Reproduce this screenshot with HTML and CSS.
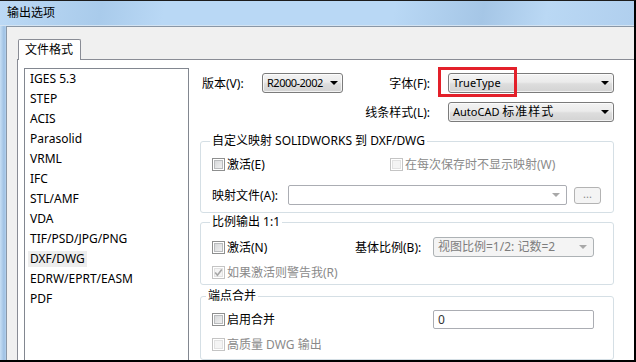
FILE: index.html
```html
<!DOCTYPE html>
<html lang="zh-CN">
<head>
  <meta charset="UTF-8">
  <title>输出选项</title>
  <link rel="stylesheet" href="styles.css">
</head>
<body>
  <div class="window">
    <div class="titlebar">输出选项</div>
    <div class="client">
      <div class="tabs">
        <div class="tab">文件格式</div>
      </div>
      <div class="panel">
        <ul class="format-list">
          <li><span>IGES 5.3</span></li>
          <li><span>STEP</span></li>
          <li><span>ACIS</span></li>
          <li><span>Parasolid</span></li>
          <li><span>VRML</span></li>
          <li><span>IFC</span></li>
          <li><span>STL/AMF</span></li>
          <li><span>VDA</span></li>
          <li><span>TIF/PSD/JPG/PNG</span></li>
          <li class="selected"><span>DXF/DWG</span></li>
          <li><span>EDRW/EPRT/EASM</span></li>
          <li><span>PDF</span></li>
        </ul>

        <div class="options">
          <div class="top-grid">
            <div class="label first">版本(V):</div>
            <div class="combo version">R2000-2002<i class="arrow"></i></div>
            <div class="label right">字体(F):</div>
            <div class="combo-wrap">
              <div class="combo">TrueType<i class="arrow"></i></div>
              <div class="mark"></div>
            </div>
            <div class="label right span3">线条样式(L):</div>
            <div class="combo">AutoCAD <span class="cjk">标准样式</span><i class="arrow"></i></div>
          </div>

          <fieldset class="group map-group">
            <legend>自定义映射 SOLIDWORKS 到 DXF/DWG</legend>
            <div class="row small">
              <label class="check cell-178"><i class="box"></i>激活(E)</label>
              <label class="check disabled"><i class="box"></i>在每次保存时不显示映射(W)</label>
            </div>
            <div class="row tall gap-13">
              <div class="cell-76">映射文件(A):</div>
              <div class="textbox map-file"><i class="arrow dim"></i></div>
              <div class="dots">...</div>
            </div>
          </fieldset>

          <fieldset class="group scale-group">
            <legend>比例输出 1:1</legend>
            <div class="row tall">
              <label class="check cell-143"><i class="box"></i>激活(N)</label>
              <div class="cell-78">基体比例(B):</div>
              <div class="combo off">视图比例=1/2: 记数=2<i class="arrow dim"></i></div>
            </div>
            <div class="row small gap-7">
              <label class="check disabled"><i class="box checked"><svg viewBox="0 0 13 13" width="13" height="13"><path d="M3.2 6.6 L5.4 9.2 L9.8 3.4" fill="none" stroke="#a6a6a6" stroke-width="1.6"/></svg></i>如果激活则警告我(R)</label>
            </div>
          </fieldset>

          <fieldset class="group merge-group">
            <legend>端点合并</legend>
            <div class="row tall">
              <label class="check cell-221"><i class="box"></i>启用合并</label>
              <div class="textbox merge-value">0</div>
            </div>
            <div class="row small gap-5">
              <label class="check disabled"><i class="box"></i>高质量 DWG 输出</label>
            </div>
          </fieldset>
        </div>
      </div>
    </div>
  </div>
</body>
</html>
```

FILE: styles.css
```css
* {
  box-sizing: border-box;
  margin: 0;
  padding: 0;
}

body {
  font-family: "Noto Sans", "Noto Sans CJK SC", sans-serif;
  font-size: 12px;
  color: #000;
  background: #fff;
}

.window {
  width: 636px;
  height: 362px;
  overflow: hidden;
  display: flex;
  flex-direction: column;
  background: linear-gradient(90deg, #c6def4 0, #9fc1e3 4px, #b3d1ef 6px);
  border-top: 1px solid #1c1c1c;
  border-right: 2px solid #000;
  border-bottom: 2px solid #000;
}

.titlebar {
  height: 25px;
  line-height: 24px;
  padding-left: 7px;
  border-bottom: 1px solid #d3e3f2;
  background: linear-gradient(100deg, #bcd9f5 0%, #a9cbeb 16%, #b9d8f5 26%, #b9d8f5 62%, #a5c6e6 76%, #bad8f4 86%, #b0cfee 100%);
}

.client {
  flex: 1;
  min-height: 0;
  margin-left: 6px;
  display: flex;
  flex-direction: column;
  padding: 12px 0 0 10px;
  background: #f0f0f0;
  border-top: 1px solid #8a97a6;
  border-left: 1px solid #8a97a6;
}

.tabs {
  display: flex;
  padding-left: 1px;
}

.tab {
  position: relative;
  z-index: 1;
  height: 21px;
  line-height: 20px;
  padding: 0 7px 0 6px;
  margin-bottom: -1px;
  background: #fff;
  border: 1px solid #898c95;
  border-bottom: none;
  border-radius: 2px 2px 0 0;
}

.panel {
  flex: 1;
  min-height: 0;
  display: flex;
  align-items: stretch;
  padding: 8px 0 0 6px;
  background: #fff;
  border-top: 1px solid #898c95;
  border-left: 1px solid #898c95;
}

/* format list */
.format-list {
  list-style: none;
  width: 165px;
  flex-shrink: 0;
  padding-left: 3px;
  border: 1px solid #828790;
  border-bottom: none;
}

.format-list li {
  height: 20px;
  display: flex;
  align-items: center;
}

.format-list span {
  padding: 0 2px;
  line-height: 16px;
}

.format-list .selected span {
  background: #ededed;
}

/* right side */
.options {
  width: 414px;
  flex-shrink: 0;
  margin-left: 11px;
}

.top-grid {
  display: grid;
  grid-template-columns: 62px 81px 1fr 166px;
  grid-auto-rows: 20px;
  row-gap: 9px;
  margin-top: 5px;
}

.label {
  display: flex;
  align-items: center;
}

.label.first {
  padding-left: 2px;
}

.label.right {
  justify-content: flex-end;
  padding-right: 18px;
}

.span3 {
  grid-column: 1 / 4;
}

.combo {
  position: relative;
  height: 20px;
  line-height: 18px;
  padding-left: 4px;
  font-size: 11px;
  border: 1px solid #7b7b7b;
  border-radius: 3px;
  background: linear-gradient(#f3f3f3 0%, #ebebeb 45%, #dddddd 55%, #d3d3d3 100%);
  box-shadow: inset 0 0 0 1px rgba(255, 255, 255, 0.7);
  white-space: nowrap;
}

.combo.version {
  letter-spacing: -0.5px;
}

.combo .cjk {
  font-size: 12px;
  letter-spacing: 1px;
}

.combo.off {
  width: 161px;
  font-size: 12px;
  color: #7d7d7d;
  border-color: #adb2b5;
  background: #f4f4f4;
  box-shadow: none;
}

.combo-wrap {
  position: relative;
}

.arrow {
  position: absolute;
  right: 4px;
  top: 7px;
  width: 0;
  height: 0;
  border-left: 4px solid transparent;
  border-right: 4px solid transparent;
  border-top: 4px solid #000;
}

.arrow.dim {
  border-top-color: #a8a8a8;
  right: 6px;
}

.mark {
  position: absolute;
  left: -10px;
  top: -6px;
  width: 79px;
  height: 30px;
  border: 3px solid #e3202a;
}

/* group boxes */
.group {
  border: 1px solid #d5dfe5;
  border-radius: 3px;
  padding: 7px 11px;
}

.group legend {
  line-height: 16px;
  padding: 0 2px;
  margin-left: -2px;
}

.map-group {
  margin-top: 11px;
}

.scale-group {
  margin-top: 1px;
  padding-bottom: 4px;
}

.merge-group {
  margin-top: 3px;
  padding-top: 5px;
  padding-bottom: 7px;
}

.merge-group legend {
  margin-left: -6px;
}

.row {
  display: flex;
  align-items: center;
}

.row.small {
  height: 16px;
}

.row.tall {
  height: 20px;
}

.gap-13 { margin-top: 13px; }
.gap-7 { margin-top: 7px; }
.gap-5 { margin-top: 7px; }

.cell-178 { width: 178px; }
.cell-143 { width: 143px; }
.cell-221 { width: 221px; }
.cell-76 { width: 76px; }
.cell-78 { width: 78px; }

.check {
  display: flex;
  align-items: center;
  white-space: nowrap;
}

.box {
  position: relative;
  width: 13px;
  height: 13px;
  margin-right: 2px;
  flex-shrink: 0;
  border: 1px solid #8e8f8f;
  background: linear-gradient(135deg, #d0d2d4, #f6f6f6);
  box-shadow: inset 0 0 0 1px #fff, inset 0 0 0 2px #b9bbbd;
}

.box svg {
  position: absolute;
  left: -1px;
  top: -1px;
}

.disabled {
  color: #8a8a8a;
}

.disabled .box {
  border-color: #c4c4c4;
  background: #f4f4f4;
  box-shadow: inset 0 0 0 1px #fff, inset 0 0 0 2px #e2e2e2;
}

.textbox {
  position: relative;
  height: 20px;
  line-height: 18px;
  padding-left: 4px;
  border: 1px solid #abadb3;
  border-radius: 2px;
  background: #fff;
}

.map-file {
  width: 279px;
}

.merge-value {
  width: 161px;
  height: 19px;
  line-height: 17px;
  color: #333;
}

.dots {
  width: 27px;
  height: 17px;
  margin-left: 7px;
  line-height: 12px;
  text-align: center;
  color: #8a8a8a;
  font-size: 11px;
  border: 1px solid #b3b3b3;
  border-radius: 3px;
  background: #f4f4f4;
}
```
